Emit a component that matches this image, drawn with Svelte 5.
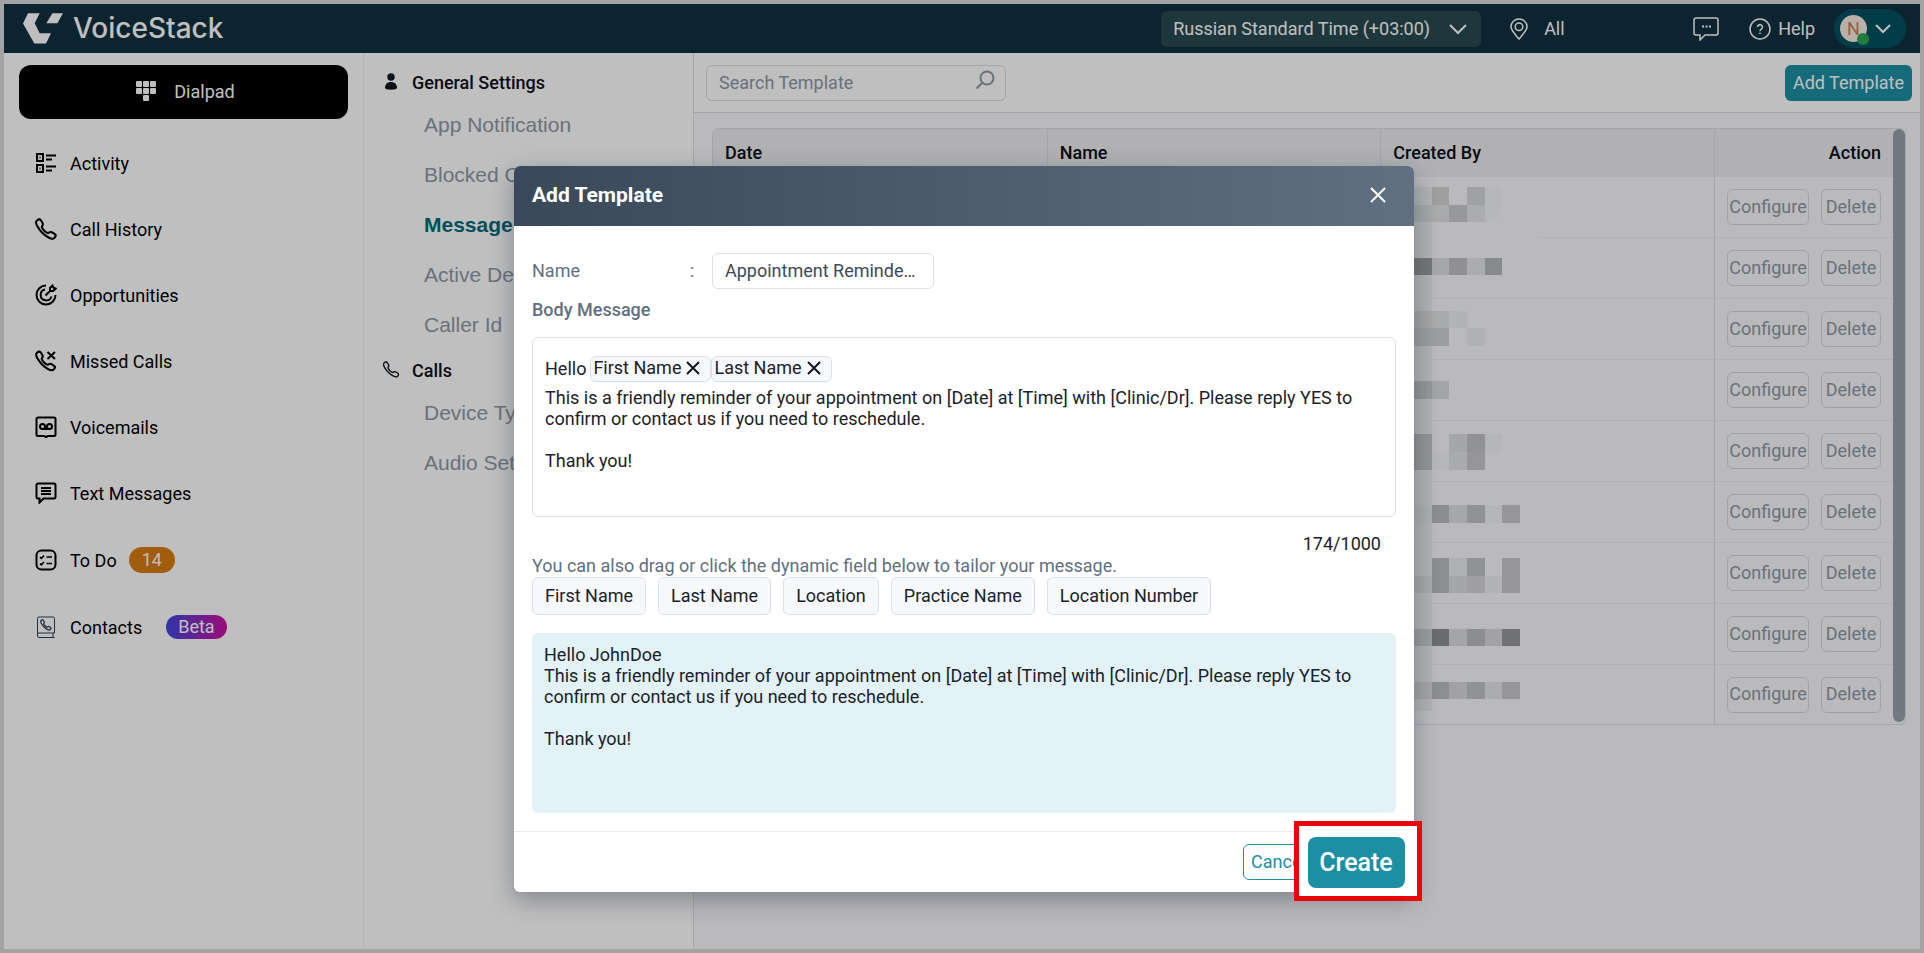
<script>
    let search = "";
    let templateName = "Appointment Reminder Template";

    const menu = [
        { label: "Activity", icon: "activity" },
        { label: "Call History", icon: "phone" },
        { label: "Opportunities", icon: "target" },
        { label: "Missed Calls", icon: "missed" },
        { label: "Voicemails", icon: "voicemail" },
        { label: "Text Messages", icon: "text" },
        { label: "To Do", icon: "todo", badge: "14", kind: "count" },
        { label: "Contacts", icon: "contacts", badge: "Beta", kind: "beta" }
    ];

    const general = ["App Notification", "Blocked Calls", "Message Templates", "Active Devices", "Caller Id"];
    const calls = ["Device Type", "Audio Settings"];
    const fields = ["First Name", "Last Name", "Location", "Practice Name", "Location Number"];
    const rows = [1, 2, 3, 4, 5, 6, 7, 8, 9];

    const CELL = 530 / 30;

    // masked names: [column, row, rows tall, color]
    const mask = [
        [1, 0, 1, "#d4d4d6"], [3, 0, 1, "#d6d7d8"], [4, 0, 1, "#f3f4f6"],
        [0, 1, 1, "#dde0e0"], [1, 1, 1, "#e2e3e5"], [2, 1, 1, "#cacbcd"], [3, 1, 1, "#e5e6e8"], [4, 1, 1, "#f5f6f8"],
        [0, 4, 1, "#9b9fa1"], [1, 4, 1, "#dedfe0"], [2, 4, 1, "#c1c1c4"], [3, 4, 1, "#e5e6e8"], [4, 4, 1, "#b4b9bb"],
        [0, 7, 1, "#dcdddf"], [1, 7, 1, "#e2e3e5"], [2, 7, 1, "#eeeff1"],
        [0, 8, 1, "#d2d3d5"], [1, 8, 1, "#d2d3d5"], [3, 8, 1, "#ebecee"],
        [0, 11, 1, "#c6cbcd"], [1, 11, 1, "#dbdcde"],
        [0, 14, 2, "#c2c7c9"], [2, 14, 1, "#dddee0"], [3, 14, 1, "#c2c3c5"], [4, 14, 1, "#f2f3f5"],
        [1, 15, 1, "#f3f4f6"], [2, 15, 1, "#e3e4e6"], [3, 15, 1, "#c8c9cb"],
        [0, 18, 1, "#e7e8ea"], [1, 18, 1, "#b9bec0"], [2, 18, 1, "#dedfe1"], [3, 18, 1, "#bfc4c6"], [4, 18, 1, "#f0f2f4"], [5, 18, 1, "#c8c9cb"],
        [1, 21, 2, "#babfc1"], [2, 21, 1, "#eaebed"], [3, 21, 1, "#bfc4c6"], [5, 21, 2, "#c8c9cb"],
        [0, 22, 1, "#e1e2e4"], [2, 22, 1, "#dddee0"], [3, 22, 1, "#d4d5d7"], [4, 22, 1, "#eeeff1"],
        [0, 25, 1, "#cfd0d2"], [1, 25, 1, "#8d9092"], [2, 25, 1, "#dbdcde"], [3, 25, 1, "#bbbdbf"], [4, 25, 1, "#d8d9db"], [5, 25, 1, "#96999b"],
        [0, 28, 1, "#dcdddf"], [1, 28, 1, "#babfc1"], [2, 28, 1, "#d8d9db"], [3, 28, 1, "#bfc4c6"], [4, 28, 1, "#e5e6e8"], [5, 28, 1, "#c8c9cb"]
    ];

    const phonePath = "M451 374c-15.88-16-54.34-39.35-73-48.76-24.3-12.24-26.3-13.24-45.4.95-12.74 9.47-21.21 17.93-36.12 14.75s-47.31-21.11-75.68-49.39-47.34-61.62-50.53-76.48 5.41-23.23 14.79-36c13.22-18 12.22-21 .92-45.3-8.81-18.9-32.84-57-48.9-72.8C119.9 44 119.9 47 108.83 51.6A160.15 160.15 0 0083 65.37C67 76 58.12 84.83 51.91 98.1s-9 44.38 23.07 102.64 54.57 88.05 101.14 134.49S258.5 406.64 310.85 436c64.76 36.27 89.6 29.2 102.91 23s22.18-15 32.83-31a159.09 159.09 0 0013.8-25.8C465 391.17 468 391.17 451 374z";
</script>

<div class="page">
    <header>
        <a class="logo" href="#/">
            <svg width="40" height="31" viewBox="0 0 120 92">
                <path fill="#fff" d="M15 0H50L35 30 50 60H84L69 91H34L0 31ZM88 0H120L103 30H70Z" />
            </svg>
            <span>VoiceStack</span>
        </a>
        <button class="timezone">
            Russian Standard Time (+03:00)
            <svg width="18" height="12" viewBox="0 0 18 12"><path d="M1 2l8 8 8-8" /></svg>
        </button>
        <button class="location">
            <svg width="18" height="22" viewBox="0 0 18 22">
                <path d="M9 21C5 16 1 12.500 1 8.800a8 7.800 0 0 1 16 0C17 12.500 13 16 9 21Z" />
                <circle cx="9" cy="8.800" r="3.800" />
            </svg>
            All
        </button>
        <button class="chat" aria-label="Chat">
            <svg width="26" height="24" viewBox="0 0 26 24">
                <path d="M3 1H23a2 2 0 0 1 2 2V16a2 2 0 0 1-2 2H12L7 23V18H3a2 2 0 0 1-2-2V3a2 2 0 0 1 2-2Z" />
                <path stroke-width="2" d="M9 9.500h2M12.500 9.500h2M16 9.500h2" />
            </svg>
        </button>
        <button class="help">
            <svg width="22" height="22" viewBox="0 0 22 22">
                <circle cx="11" cy="11" r="10" />
                <path d="M8.600 9a2.400 2.400 0 1 1 3.800 2c-1 .7-1.400 1.100-1.400 2.200M11 14.600v1.400" />
            </svg>
            Help
        </button>
        <button class="user" aria-label="Account">
            <span class="avatar">N<span class="status"></span></span>
            <svg width="16" height="11" viewBox="0 0 16 11"><path d="M1 2l7 7 7-7" /></svg>
        </button>
    </header>

    <div class="columns">
        <nav class="sidebar">
            <button class="dialpad">
                <svg width="20" height="21" viewBox="0 0 20 21">
                    {#each [[0, 0], [7, 0], [14, 0], [0, 7], [7, 7], [14, 7], [7, 14]] as [x, y]}
                        <rect {x} {y} width="6" height="6" rx="1" fill="#fff" />
                    {/each}
                </svg>
                Dialpad
            </button>
            {#each menu as item}
                <a href="#/{item.icon}">
                    <svg class:slate={item.icon == "contacts"} width="22" height="22" viewBox="0 0 22 22">
                        {#if item.icon == "activity"}
                            <path d="M2 2H8V9H2ZM2 13H8V20H2Z" />
                            <path d="M4.500 5.500h1M4.500 16.500h1M11 3.500H21M11 7.500H17M11 14.500H21M11 18.500H17" />
                        {:else if item.icon == "phone"}
                            <path stroke-width="44" transform="translate(-1.2 -1.2) scale(.0475)" d={phonePath} />
                        {:else if item.icon == "target"}
                            <path d="M11 1.500A9.500 9.500 0 1 0 20.500 11M10 5.500A5.500 5.500 0 1 0 16.400 12.500" />
                            <path d="M10.500 11.500L15 7M15 7V4L17.500 1.500 18.500 3.700 20.700 4.500 18 7Z" />
                        {:else if item.icon == "missed"}
                            <path stroke-width="46" transform="translate(-1 -.8) scale(.0455)" d={phonePath} />
                            <path d="M12.500 2L20 9M20 2L12.500 9" />
                        {:else if item.icon == "voicemail"}
                            <path d="M3 1.500H19a1.500 1.500 0 0 1 1.500 1.500V18.500A1.500 1.500 0 0 1 19 20H12.500L11 21.500 9.500 20H3a1.500 1.500 0 0 1-1.500-1.500V3A1.500 1.500 0 0 1 3 1.500Z" />
                            <circle cx="7.500" cy="10.500" r="2.500" />
                            <circle cx="14.500" cy="10.500" r="2.500" />
                            <path d="M7.500 13h7" />
                        {:else if item.icon == "text"}
                            <path d="M3 1.500H19a1.500 1.500 0 0 1 1.500 1.500V15A1.500 1.500 0 0 1 19 16.500H8.500L4.500 20.500V16.500H3A1.500 1.500 0 0 1 1.500 15V3A1.500 1.500 0 0 1 3 1.500Z" />
                            <path d="M6 6h10M6 9h10M6 12h10" />
                        {:else if item.icon == "todo"}
                            <rect x="1.500" y="1.500" width="19" height="19" rx="5" />
                            <path stroke-width="1.600" d="M5 8.200l1.300 1.200L9 6.600M5 14.600l1.300 1.200L9 13M11.500 8H17M11.500 14.500H17" />
                        {:else}
                            <path d="M19.500 17V2.500a1.500 1.500 0 0 0-1.500-1.500H4A1.500 1.500 0 0 0 2.500 2.500V20A1.500 1.500 0 0 0 4 21.500H19.500M2.500 18.500A1.500 1.500 0 0 1 4 17H19.500M18 17V21.500" />
                            <path stroke-width="52" transform="translate(4.500 2.500) scale(.025)" d={phonePath} />
                        {/if}
                    </svg>
                    {item.label}
                    {#if item.badge}
                        <span class="badge {item.kind}">{item.badge}</span>
                    {/if}
                </a>
            {/each}
        </nav>

        <nav class="settings">
            <h2>
                <svg width="16" height="18" viewBox="0 0 16 18">
                    <circle cx="8" cy="4" r="3.700" fill="#10171e" />
                    <path fill="#10171e" d="M2 15C2 11 4.500 9 8 9s6 2 6 6c0 .8-2 1.700-6 1.700s-6-.9-6-1.700Z" />
                </svg>
                General Settings
            </h2>
            {#each general as item}
                <a href="#/settings" class:active={item == "Message Templates"}>{item}</a>
            {/each}
            <h2>
                <svg width="16" height="18" viewBox="0 0 16 18">
                    <path stroke="#10171e" stroke-width="38" transform="translate(-1.200 -1) scale(.0365)" d={phonePath} />
                </svg>
                Calls
            </h2>
            {#each calls as item}
                <a href="#/settings">{item}</a>
            {/each}
        </nav>

        <main>
            <div class="toolbar">
                <label class="search">
                    <input type="text" placeholder="Search Template" aria-label="Search Template" bind:value={search} />
                    <svg width="20" height="20" viewBox="0 0 20 20">
                        <circle cx="12" cy="8" r="6.500" />
                        <path d="M7.300 12.700L1.500 18.500" />
                    </svg>
                </label>
                <button class="primary">Add Template</button>
            </div>

            <div class="tableBox">
                <table>
                    <thead>
                        <tr>
                            <th>Date</th>
                            <th>Name</th>
                            <th>Created By</th>
                            <th class="action">Action</th>
                        </tr>
                    </thead>
                    <tbody>
                        {#each rows as row, i}
                            <tr>
                                <td></td>
                                <td></td>
                                <td>
                                    {#if i == 0}
                                        <svg class="mask" width="126" height="524" viewBox="0 0 126 524" shape-rendering="crispEdges">
                                            <rect width="126" height="524" fill="#f8f9fb" />
                                            <rect width="18" height="524" fill="#edeef0" />
                                            {#each mask as [x, y, tall, color]}
                                                <rect x={x * CELL} y={y * CELL} width={CELL} height={tall * CELL} fill={color} />
                                            {/each}
                                        </svg>
                                    {/if}
                                </td>
                                <td class="action">
                                    <div class="actions">
                                        <button>Configure</button>
                                        <button>Delete</button>
                                    </div>
                                </td>
                            </tr>
                        {/each}
                    </tbody>
                </table>
                <div class="scrollbar"></div>
            </div>
        </main>
    </div>

    <div class="overlay">
        <form class="modal" on:submit|preventDefault>
            <div class="modalHead">
                <h1>Add Template</h1>
                <button type="button" aria-label="Close">
                    <svg width="18" height="18" viewBox="0 0 18 18"><path d="M2 2L16 16M16 2L2 16" /></svg>
                </button>
            </div>

            <div class="modalBody">
                <div class="nameRow">
                    <label for="templateName">Name</label>
                    <span>:</span>
                    <input id="templateName" type="text" bind:value={templateName} />
                </div>
                <h3 id="bodyLabel">Body Message</h3>
                <div class="editor" contenteditable="true" role="textbox" tabindex="0" aria-multiline="true" aria-labelledby="bodyLabel">
                    <div class="greeting">
                        <span>Hello</span>
                        {#each ["First Name", "Last Name"] as chip}
                            <span class="chip">{chip}<svg width="14" height="14" viewBox="0 0 14 14"><path d="M1 1L13 13M13 1L1 13" /></svg></span>
                        {/each}
                    </div>
                    <div>This is a friendly reminder of your appointment on [Date] at [Time] with [Clinic/Dr]. Please reply YES to confirm or contact us if you need to reschedule.</div>
                    <div><br /></div>
                    <div>Thank you!</div>
                </div>
                <div class="counter">174/1000</div>
                <p class="hint">You can also drag or click the dynamic field below to tailor your message.</p>
                <div class="fields">
                    {#each fields as field}
                        <button type="button">{field}</button>
                    {/each}
                </div>
                <div class="preview">
                    <div>Hello JohnDoe</div>
                    <div>This is a friendly reminder of your appointment on [Date] at [Time] with [Clinic/Dr]. Please reply YES to confirm or contact us if you need to reschedule.</div>
                    <div><br /></div>
                    <div>Thank you!</div>
                </div>
            </div>

            <div class="modalFoot">
                <button type="button" class="cancel">Cancel</button>
                <div class="highlight">
                    <button type="submit">Create</button>
                </div>
            </div>
        </form>
    </div>
</div>

<style>
    :global(body) {
        margin: 0;
        background: #a3a3a3;
    }

    * {
        box-sizing: border-box;
    }

    .page {
        position: relative;
        display: flex;
        flex-direction: column;
        min-height: 100vh;
        border: 4px solid #a3a3a3;
        background: white;
        color: #1a2229;
        font-family: Roboto, sans-serif;
        font-size: 18px;
        line-height: 21px;
    }

    button,
    input {
        font: inherit;
        color: inherit;
    }

    button {
        padding: 0;
        border: none;
        background: none;
        cursor: pointer;
    }

    a {
        color: inherit;
        text-decoration: none;
    }

    h1, h2, h3, p {
        margin: 0;
        font-size: 18px;
        font-weight: 500;
    }

    svg {
        flex: none;
        fill: none;
        stroke: none;
    }

    header {
        display: flex;
        align-items: center;
        height: 49px;
        padding: 0 14px 0 19px;
        background: #10313f;
        color: white;
    }

    header svg {
        stroke: white;
        stroke-width: 2px;
    }

    header button {
        display: flex;
        align-items: center;
    }

    .logo {
        display: flex;
        align-items: center;
        gap: 10px;
        margin-right: auto;
        font-family: Inter, sans-serif;
        font-size: 28px;
        font-weight: 500;
    }

    .logo svg {
        stroke: none;
    }

    .timezone {
        justify-content: space-between;
        width: 320px;
        height: 36px;
        padding: 0 14px 0 12px;
        border-radius: 6px;
        background: #284a50;
    }

    .location {
        gap: 16px;
        width: 183px;
        margin-left: 29px;
    }

    .location svg,
    .chat svg,
    .help svg {
        stroke-width: 1.5px;
    }

    .help {
        gap: 7px;
        margin: 0 19px 0 30px;
    }

    .user {
        gap: 8px;
        width: 72px;
        height: 39px;
        padding: 0 6px;
        border-radius: 20px;
        background: #005260;
    }

    .avatar {
        position: relative;
        width: 27px;
        height: 27px;
        border-radius: 50%;
        background: #f7ece2;
        color: #c08050;
        line-height: 27px;
        text-align: center;
    }

    .status {
        position: absolute;
        right: -2px;
        bottom: -3px;
        width: 12px;
        height: 12px;
        border-radius: 50%;
        background: #2da654;
    }

    .columns {
        display: flex;
        flex: 1;
    }

    .sidebar {
        width: 360px;
        padding: 12px 15px;
        border-right: 1px solid #f0f0f0;
    }

    .dialpad {
        display: flex;
        align-items: center;
        justify-content: center;
        gap: 18px;
        width: 100%;
        height: 54px;
        margin-bottom: 11px;
        padding: 0 0 2px 4px;
        border-radius: 12px;
        background: black;
        color: white;
    }

    .sidebar a {
        display: flex;
        align-items: center;
        min-height: 66px;
        padding: 20px 16px;
        color: black;
    }

    .sidebar a svg {
        margin-right: 13px;
        stroke: black;
        stroke-width: 2px;
    }

    .sidebar a .slate {
        stroke: #2c3e50;
        stroke-width: 1px;
    }

    .badge {
        border-radius: 13px;
        color: white;
    }

    .count {
        margin: 1px 0 1px 12px;
        padding: 0 13px;
        background: #d97c0e;
        line-height: 26px;
    }

    .beta {
        margin-left: 24px;
        padding: 0 12px;
        background: linear-gradient(90deg, #4048e0, #d010a0);
        line-height: 24px;
    }

    .settings {
        width: 330px;
        padding: 11px 19px;
        border-right: 1px solid #dcdee6;
    }

    .settings h2 {
        display: flex;
        align-items: center;
        gap: 13px;
        height: 36px;
        color: #0b0f18;
    }

    .settings a + h2 {
        margin-top: 2px;
    }

    .settings a {
        display: block;
        padding-left: 41px;
        color: #8c98a4;
        font-family: "Liberation Sans", Arial, sans-serif;
        font-size: 21px;
        line-height: 50px;
    }

    .settings .active {
        color: #006a7c;
        font-weight: bold;
    }

    main {
        flex: 1;
        background: #f8f9fc;
    }

    .toolbar {
        display: flex;
        align-items: center;
        justify-content: space-between;
        height: 60px;
        padding: 0 8px 0 12px;
        border-bottom: 1px solid #dcdee6;
        background: white;
    }

    .search {
        display: flex;
        align-items: center;
        width: 300px;
        height: 36px;
        padding: 0 10px 0 12px;
        border: 1px solid #dcdee6;
        border-radius: 6px;
    }

    .search input {
        flex: 1;
        min-width: 0;
        padding: 0;
        border: none;
        background: none;
        outline: none;
    }

    .search input::placeholder {
        color: #8c98a4;
    }

    .search svg {
        margin-bottom: 6px;
        stroke: #8c98a4;
        stroke-width: 2px;
    }

    .primary {
        height: 36px;
        padding: 0 8px;
        border-radius: 6px;
        background: #1d8fa3;
        color: white;
    }

    .tableBox {
        display: flex;
        margin: 15px 14px 0 18px;
        border: 1px solid #dcdee6;
        border-radius: 6px;
        overflow: hidden;
    }

    table {
        flex: 1;
        width: 100%;
        min-width: 0;
        border-collapse: separate;
        border-spacing: 0;
        table-layout: fixed;
    }

    th {
        height: 48px;
        padding: 0 12px 2px;
        background: #ecedf0;
        color: #0b0f18;
        font-weight: 500;
        text-align: left;
    }

    td {
        position: relative;
        height: 61px;
        padding: 0 12px;
        border-bottom: 1px solid #ebecee;
    }

    th + th,
    td + td {
        border-left: 1px solid #dcdee6;
    }

    td:nth-child(3) {
        border-left-color: transparent;
    }

    tr:last-child td {
        height: 59px;
        border-bottom: none;
    }

    .action {
        width: 179px;
        text-align: right;
    }

    .actions {
        display: flex;
        justify-content: flex-end;
        gap: 12px;
    }

    .actions button {
        flex: none;
        width: 60px;
        height: 36px;
        padding-bottom: 2px;
        border: 1px solid #d4d6df;
        border-radius: 6px;
        color: #8c98a4;
    }

    .actions button:first-child {
        width: 82px;
    }

    .mask {
        position: absolute;
        top: 10px;
        left: 33px;
    }

    .scrollbar {
        flex: none;
        width: 12px;
        margin-bottom: 2px;
        border-radius: 6px;
        background: #95a2ac;
    }

    .overlay {
        position: absolute;
        inset: 0;
        padding: 162px 0 0 4px;
        background: rgba(0, 0, 0, 0.25);
    }

    .modal {
        width: 900px;
        max-width: 100%;
        margin: 0 auto;
        border-radius: 6px;
        background: white;
        box-shadow: 0 8px 24px rgba(16, 30, 45, 0.35);
    }

    .modalHead {
        display: flex;
        align-items: center;
        justify-content: space-between;
        height: 60px;
        padding: 0 27px 2px 18px;
        border-radius: 6px 6px 0 0;
        background: linear-gradient(90deg, #3a495a, #607080);
        color: white;
    }

    .modalHead h1 {
        font-size: 21px;
        font-weight: 700;
    }

    .modalHead button {
        display: flex;
    }

    .modalHead svg {
        stroke: white;
        stroke-width: 2px;
    }

    .modalBody {
        padding: 27px 18px 18px;
    }

    .nameRow {
        display: flex;
        align-items: center;
        color: #617080;
    }

    .nameRow label {
        width: 158px;
        padding-bottom: 2px;
    }

    .nameRow span {
        width: 22px;
        padding-bottom: 2px;
    }

    .nameRow input {
        width: 222px;
        height: 36px;
        padding: 0 16px 2px 12px;
        border: 1px solid #dadfe8;
        border-radius: 6px;
        color: #3c4a5a;
        text-overflow: ellipsis;
    }

    h3 {
        margin: 10px 0 17px;
        color: #617080;
    }

    .editor {
        height: 180px;
        padding: 16px 12px;
        border: 1px solid #dadfe8;
        border-radius: 6px;
        outline: none;
    }

    .greeting {
        display: flex;
        align-items: center;
        height: 29px;
        margin-bottom: 4px;
    }

    .greeting > span:first-child {
        margin-right: 4px;
    }

    .chip {
        display: flex;
        align-items: center;
        gap: 5px;
        height: 26px;
        padding: 0 10px 2px 2px;
        border: 1px solid #dadfe8;
        border-radius: 6px;
        background: #f7f8fb;
    }

    .chip svg {
        stroke: #10171e;
        stroke-width: 2px;
    }

    .counter {
        margin: 16px 15px 1px 0;
        text-align: right;
    }

    .hint {
        margin-bottom: 1px;
        color: #617080;
        font-weight: 400;
    }

    .fields {
        display: flex;
        flex-wrap: wrap;
        gap: 12px;
        margin-bottom: 18px;
    }

    .fields button {
        height: 38px;
        padding: 0 12px 2px;
        border: 1px solid #dadfe8;
        border-radius: 6px;
        background: #f7f8fb;
    }

    .preview {
        height: 180px;
        padding: 11px 12px;
        border-radius: 6px;
        background: #e3f2f7;
    }

    .modalFoot {
        position: relative;
        display: flex;
        justify-content: flex-end;
        height: 61px;
        padding: 12px 100px 12px 18px;
        border-top: 1px solid #ebebee;
    }

    .cancel {
        width: 71px;
        height: 36px;
        padding-bottom: 2px;
        border: 1px solid #1d8fa3;
        border-radius: 6px;
        color: #1d8fa3;
    }

    .highlight {
        position: absolute;
        right: -8px;
        bottom: -9px;
        display: flex;
        align-items: center;
        justify-content: center;
        width: 128px;
        height: 80px;
        padding: 2px 4px 0 0;
        border: 5px solid #e80606;
        background: white;
    }

    .highlight button {
        width: 97px;
        height: 51px;
        border-radius: 8px;
        background: #1d8fa3;
        color: white;
        font-size: 25px;
        font-weight: 500;
    }
</style>
